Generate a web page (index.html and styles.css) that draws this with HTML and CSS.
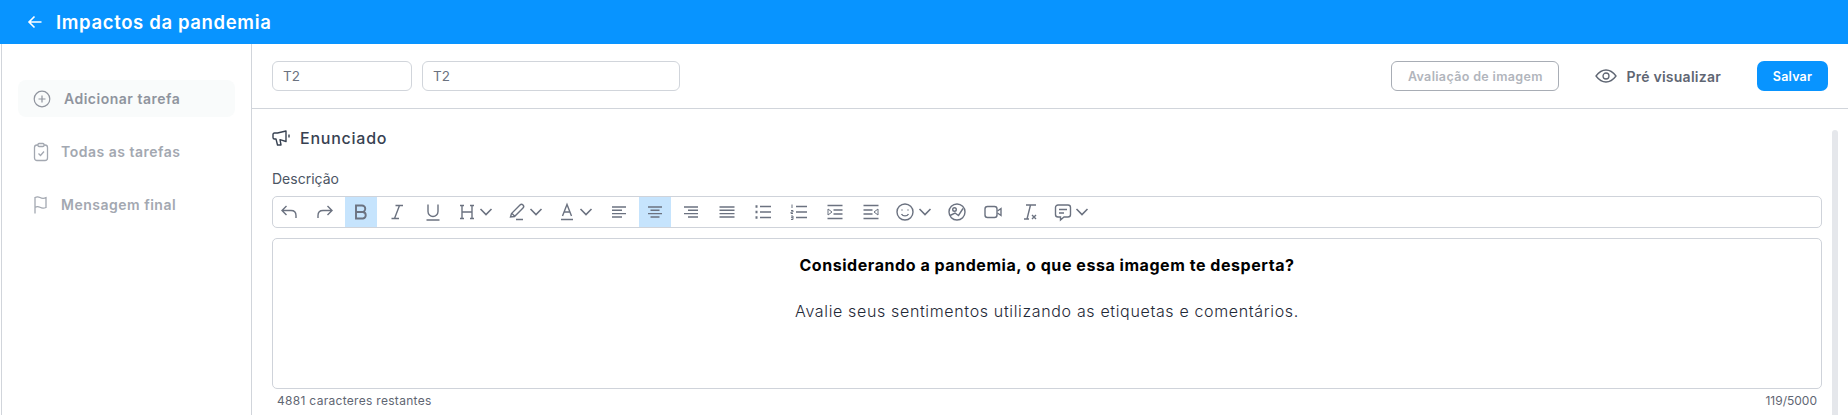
FILE: index.html
```html
<!DOCTYPE html>
<html lang="pt-BR">
<head>
<meta charset="utf-8">
<title>Impactos da pandemia</title>
<link rel="stylesheet" href="styles.css">
</head>
<body>
<header class="header">
  <svg class="back" viewBox="0 0 16 16" width="16" height="16"><path d="M14.5 8H2M7.500 2.500 2 8l5.500 5.500" fill="none" stroke="#fff" stroke-width="1.6"/></svg>
  <h1 class="title">Impactos da pandemia</h1>
</header>
<div class="body">
  <nav class="side">
    <a class="nav nav-active">
      <svg width="18" height="18" viewBox="0 0 18 18" fill="none" stroke="#8f949e" stroke-width="1.2"><circle cx="9" cy="9" r="7.800"/><path d="M9 5.500v7M5.500 9h7"/></svg>
      <span>Adicionar tarefa</span>
    </a>
    <a class="nav">
      <svg width="18" height="20" viewBox="0 0 18 20" fill="none" stroke="#a3a8b1" stroke-width="1.3"><rect x="2.500" y="3" width="13" height="15.500" rx="2.500"/><rect x="6" y="1.500" width="6" height="3" rx="1" fill="#fff"/><path d="m6.500 11.500 2 2 3.500-4"/></svg>
      <span>Todas as tarefas</span>
    </a>
    <a class="nav">
      <svg width="18" height="20" viewBox="0 0 18 20" fill="none" stroke="#a3a8b1" stroke-width="1.3"><path d="M3 18.500V2.500c2-1 3.500-.8 5 0s3.500 1.200 6 .2v9.800c-2.500 1-4.500.6-6-.2s-3-1-5 0"/></svg>
      <span>Mensagem final</span>
    </a>
  </nav>
  <main class="main">
    <div class="topbar">
      <div class="field field-s">T2</div>
      <div class="field field-l">T2</div>
      <div class="spacer"></div>
      <button class="btn-outline">Avaliação de imagem</button>
      <button class="btn-preview">
        <svg width="22" height="14" viewBox="0 0 22 14" fill="none" stroke="#5f6673" stroke-width="1.3"><path d="M1 7c3-4 6-6 10-6s7 2 10 6c-3 4-6 6-10 6S4 11 1 7Z"/><circle cx="11" cy="7" r="3"/></svg>
        <span>Pré visualizar</span>
      </button>
      <button class="btn-save">Salvar</button>
    </div>
    <div class="content">
      <div class="scrollbar"></div>
      <div class="section-title">
        <svg width="19" height="20" viewBox="0 0 19 20" fill="none" stroke="#374151" stroke-width="1.400" stroke-linejoin="round"><path d="M14 3 5.500 5H2.500C1.500 5 1 5.600 1 6.500v3c0 .9.500 1.500 1.500 1.500H4l1.500 6H9L8 11.700l6 1.800V3Z"/><path d="M17 6.500v3"/></svg>
        <span>Enunciado</span>
      </div>
      <label class="label">Descrição</label>
      <div class="toolbar">
        <button class="tb"><svg viewBox="0 0 24 24"><path d="M9.500 6 5 10.500 9.500 15M5 10.500h9c3 0 5 2 5 5V18"/></svg></button>
        <button class="tb"><svg viewBox="0 0 24 24"><path d="m14.500 6 4.500 4.500-4.500 4.500m4.500-4.500h-9c-3 0-5 2-5 5V18"/></svg></button>
        <button class="tb tb-on"><svg viewBox="0 0 24 24"><path class="thick" d="M7 5.500h6a3.200 3.200 0 0 1 0 6.500H7Zm0 6.500h7a3.300 3.300 0 0 1 0 6.500H7Z"/></svg></button>
        <button class="tb"><svg viewBox="0 0 24 24"><path d="M10.500 5.500H18M6.500 18.500H14M14.500 5.500l-5 13"/></svg></button>
        <button class="tb"><svg viewBox="0 0 24 24"><path d="M7 4.500v7a5 5 0 0 0 10 0v-7M5.500 20h13"/></svg></button>
        <button class="tb tb-split tb-h"><svg viewBox="0 0 24 24"><path d="M7 5.500v13M17 5.500v13M7 12h10M5 5.500h4M15 5.500h4M5 18.500h4M15 18.500h4"/></svg><svg class="chev" viewBox="0 0 14 10"><path d="m1.500 2 5.500 5.500L12.500 2"/></svg></button>
        <button class="tb tb-split tb-m"><svg viewBox="0 0 24 24"><path d="M5.500 17 6.500 13.500 15 5a2 2 0 0 1 3 3l-8.500 8.500-4 .5ZM7 13.500l3 3M11 19.500h7"/></svg><svg class="chev" viewBox="0 0 14 10"><path d="m1.500 2 5.500 5.500L12.500 2"/></svg></button>
        <button class="tb tb-split tb-a"><svg viewBox="0 0 24 24"><path d="m7.500 16 4.500-11.500L16.500 16M9 12h6M6 19.500h12"/></svg><svg class="chev" viewBox="0 0 14 10"><path d="m1.500 2 5.500 5.500L12.500 2"/></svg></button>
        <button class="tb"><svg viewBox="0 0 24 24"><path d="M5 7h14M5 10.300h10M5 13.600h14M5 17h10"/></svg></button>
        <button class="tb tb-on"><svg viewBox="0 0 24 24"><path d="M5 7h14M7.500 10.300h9M5 13.600h14M7.500 17h9"/></svg></button>
        <button class="tb"><svg viewBox="0 0 24 24"><path d="M5 7h14M9 10.300h10M5 13.600h14M9 17h10"/></svg></button>
        <button class="tb"><svg viewBox="0 0 24 24"><path d="M4.500 7h15M4.500 10.300h15M4.500 13.600h15M4.500 17h15"/></svg></button>
        <button class="tb"><svg viewBox="0 0 24 24"><path d="M9 6.500h11M9 12h11M9 17.500h11"/><path class="dots" d="M4.500 6.500h2M4.500 12h2M4.500 17.500h2"/></svg></button>
        <button class="tb"><svg viewBox="0 0 24 24"><path d="M9 6.500h11M9 12h11M9 17.500h11"/><path class="thin" d="M5 4.500v3.500M4 10.500h2v1.500H4v1.500h2M4 16h2v3.500H4M4 17.700h2"/></svg></button>
        <button class="tb"><svg viewBox="0 0 24 24"><path d="M4.500 5.500h15M10.500 10h9M10.500 14h9M4.500 18.500h15"/><path class="thin" d="M5 9v6l4-3Z"/></svg></button>
        <button class="tb"><svg viewBox="0 0 24 24"><path d="M4.500 5.500h15M4.500 10h9M4.500 14h9M4.500 18.500h15"/><path class="thin" d="M19 9v6l-4-3Z"/></svg></button>
        <button class="tb tb-split tb-e"><svg viewBox="0 0 24 24"><circle cx="12" cy="12" r="8"/><path d="M8.500 14c1.500 2.500 5.500 2.500 7 0M9 9.500v1M15 9.500v1"/></svg><svg class="chev" viewBox="0 0 14 10"><path d="m1.500 2 5.500 5.500L12.500 2"/></svg></button>
        <button class="tb"><svg viewBox="0 0 24 24"><circle cx="12" cy="12" r="8"/><circle cx="9.500" cy="9.500" r="1.800"/><path d="m5 15.500 5-2.500 3.500 2.500 4.500-7"/></svg></button>
        <button class="tb"><svg viewBox="0 0 24 24"><rect x="4" y="6.500" width="12" height="11" rx="2.500"/><path d="m16.500 11 3.500-2.500v7L16.500 13"/></svg></button>
        <button class="tb"><svg viewBox="0 0 24 24"><path d="M9 5h10M13.500 5 10 19M7 19h5M15 15l4 4M19 15l-4 4"/></svg></button>
        <button class="tb tb-split tb-c"><svg viewBox="0 0 24 24"><path d="M7 5h10a2.500 2.500 0 0 1 2.500 2.500v7A2.500 2.500 0 0 1 17 17h-4l-3.500 3v-3H7a2.500 2.500 0 0 1-2.500-2.500v-7A2.500 2.500 0 0 1 7 5ZM8 9.500h8M8 13h5"/></svg><svg class="chev" viewBox="0 0 14 10"><path d="m1.500 2 5.500 5.500L12.500 2"/></svg></button>
      </div>
      <div class="editor">
        <p class="line-strong">Considerando a pandemia, o que essa imagem te desperta?</p>
        <p class="line-body">Avalie seus sentimentos utilizando as etiquetas e comentários.</p>
      </div>
      <div class="counter">
        <span class="count-left">4881 caracteres restantes</span>
        <span class="count-right">119/5000</span>
      </div>
    </div>
  </main>
</div>
</body>
</html>
```
FILE: styles.css
```css
* { box-sizing: border-box; }
html, body { margin: 0; height: 100%; }
body {
  height: 415px;
  overflow: hidden;
  background: #fff;
  font-family: Inter, "Liberation Sans", sans-serif;
  color: #374151;
}
button { font-family: inherit; cursor: pointer; }

.header {
  height: 44px;
  background: #0894ff;
  display: flex;
  align-items: center;
  padding: 0 0 0 27px;
  gap: 13px;
}
.back { flex: none; }
.title {
  margin: 0;
  font-size: 18.5px;
  font-weight: 600;
  color: #fff;
  letter-spacing: 0.65px;
}

.body { display: flex; height: 371px; margin-left: 1px; border-left: 1px solid #d1d5db; }

.side {
  width: 250px;
  flex: none;
  border-right: 1px solid #d1d5db;
  padding: 36px 16px 0 16px;
  display: flex;
  flex-direction: column;
  gap: 16px;
}
.nav {
  height: 37px;
  display: flex;
  align-items: center;
  gap: 11px;
  padding-left: 14px;
  font-size: 14px;
  font-weight: 600;
  letter-spacing: 0.5px;
  color: #a3a8b1;
  white-space: nowrap;
}
.nav-active {
  background: #f9fbfb;
  border-radius: 8px;
  color: #8f949e;
  padding-left: 15px;
  gap: 13px;
}

.main { flex: 1; min-width: 0; display: flex; flex-direction: column; }

.topbar {
  height: 65px;
  flex: none;
  border-bottom: 1px solid #d1d5db;
  padding: 17px 20px 0 20px;
  display: flex;
  align-items: flex-start;
  gap: 10px;
}
.field {
  height: 30px;
  border: 1px solid #d1d5db;
  border-radius: 6px;
  display: flex;
  align-items: center;
  padding-left: 10px;
  font-size: 13.5px;
  color: #6b7280;
}
.field-s { width: 140px; }
.field-l { width: 258px; }
.spacer { flex: 1; }

.btn-outline {
  width: 168px;
  height: 30px;
  background: #fff;
  border: 1px solid #a8adb5;
  border-radius: 6px;
  color: #b1b5bc;
  font-size: 12.5px;
  font-weight: 600;
  letter-spacing: 0.35px;
  padding: 0;
}
.btn-preview {
  height: 30px;
  background: none;
  border: 0;
  padding: 0;
  margin: 0 26px 0 26px;
  display: flex;
  align-items: center;
  gap: 9px;
  font-size: 14px;
  font-weight: 600;
  letter-spacing: 0.25px;
  color: #5f6673;
}
.btn-save {
  width: 71px;
  height: 30px;
  background: #0894ff;
  border: 0;
  border-radius: 7px;
  color: #fff;
  font-size: 12.5px;
  font-weight: 600;
  letter-spacing: 0.2px;
  padding: 0;
}

.content {
  position: relative;
  flex: 1;
  padding: 18px 26px 0 20px;
}
.scrollbar {
  position: absolute;
  top: 21px;
  bottom: 0;
  right: 10px;
  width: 6px;
  background: #e5e7eb;
  border-radius: 3px 3px 0 0;
}
.section-title {
  height: 22px;
  display: flex;
  align-items: center;
  gap: 9px;
  font-size: 16px;
  font-weight: 500;
  letter-spacing: 0.75px;
  color: #374151;
}
.label {
  display: block;
  margin-top: 20px;
  height: 20px;
  line-height: 20px;
  font-size: 14px;
  color: #4b5563;
}
.toolbar {
  margin-top: 7px;
  height: 32px;
  border: 1px solid #cfd3da;
  border-radius: 5px;
  display: flex;
  gap: 4px;
}
.tb {
  width: 32px;
  height: 30px;
  flex: none;
  padding: 0;
  border: 0;
  background: none;
  display: flex;
  align-items: center;
  justify-content: center;
}
.tb svg {
  width: 24px;
  height: 24px;
  fill: none;
  stroke: #6b7280;
  stroke-width: 1.4;
  flex: none;
}
.tb svg .thick { stroke-width: 1.9; }
.tb svg .dots { stroke-width: 2.4; }
.tb svg .thin { stroke-width: 1; }
.tb svg.chev { width: 14px; height: 10px; stroke-width: 1.6; }
.tb-on { background: #c6e4fd; }
.tb-split { justify-content: flex-start; }
.tb-h { width: 48px; padding-left: 2px; }
.tb-m { width: 48px; }
.tb-a { width: 42px; margin-left: -2px; margin-right: 2px; }
.tb-e { width: 46px; padding-left: 2px; }
.tb-e .chev { margin-left: 1px; }
.tb-c { width: 48px; padding-left: 2px; }

.editor {
  margin-top: 10px;
  height: 151px;
  border: 1px solid #cfd3da;
  border-radius: 5px;
  padding-top: 14px;
  text-align: center;
  font-size: 16px;
}
.editor p { margin: 0; line-height: 24px; }
.line-strong { font-weight: 700; color: #000; letter-spacing: 0.55px; }
.line-body { margin-top: 22px !important; font-weight: 300; color: #1f2937; letter-spacing: 0.65px; }

.counter {
  height: 23px;
  display: flex;
  align-items: center;
  justify-content: space-between;
  padding: 0 5px;
  font-size: 12px;
  color: #5f6673;
}
.count-left { letter-spacing: 0.3px; }
```
